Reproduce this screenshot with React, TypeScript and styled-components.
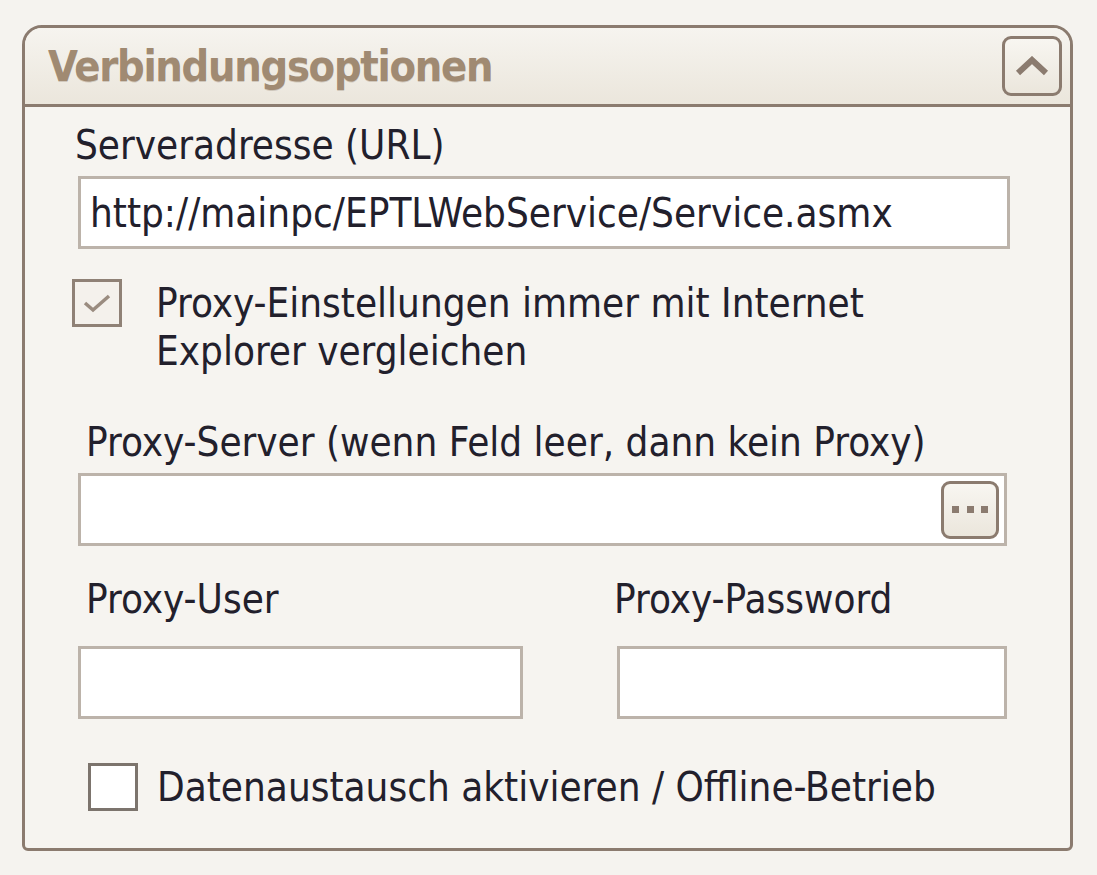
import React from "react";
import styled, { createGlobalStyle } from "styled-components";

const GlobalStyle = createGlobalStyle`
  html, body {
    margin: 0;
    padding: 0;
    background: #f5f3ef;
  }
  body {
    font-family: "DejaVu Sans Condensed", "DejaVu Sans", "Liberation Sans", sans-serif;
    font-stretch: condensed;
    color: #22202c;
  }
`;

const Page = styled.div`
  padding: 25px 0 0 22px;
  height: 875px;
  box-sizing: border-box;
`;

const Panel = styled.section`
  width: 1051px;
  height: 826px;
  box-sizing: border-box;
  border: 3px solid #8b7b6f;
  border-radius: 20px 20px 6px 6px;
  background: #f6f4f0;
  display: flex;
  flex-direction: column;
  overflow: hidden;
`;

const Header = styled.header`
  height: 79px;
  flex: none;
  box-sizing: border-box;
  border-bottom: 3px solid #8b7b6f;
  background: linear-gradient(#f6f4ef, #ebe6dc);
  display: flex;
  align-items: center;
  justify-content: space-between;
  padding: 0 8px 0 23px;
`;

const Title = styled.h2`
  margin: 0;
  font-size: 43px;
  font-weight: bold;
  color: #a08a72;
  letter-spacing: -1.3px;
  text-shadow: 0 1px 0 rgba(120, 100, 80, 0.25);
`;

const SquareButton = styled.button<{ size: number }>`
  width: ${(p) => p.size}px;
  height: ${(p) => p.size}px;
  padding: 0;
  box-sizing: border-box;
  border: 3px solid #8b7b6f;
  border-radius: 9px;
  background: linear-gradient(#f8f6f1, #ebe6dc);
  display: flex;
  align-items: center;
  justify-content: center;
  flex: none;
`;

const Body = styled.div`
  display: flex;
  flex-direction: column;
  padding-top: 14px;
`;

const Label = styled.div<{ indent: number; top?: number }>`
  margin-left: ${(p) => p.indent}px;
  margin-top: ${(p) => p.top ?? 0}px;
  font-size: 40px;
  line-height: 48px;
  white-space: nowrap;
`;

const Field = styled.div<{ width: number }>`
  width: ${(p) => p.width}px;
  height: 73px;
  box-sizing: border-box;
  border: 3px solid #bcb3aa;
  background: #ffffff;
  display: flex;
  align-items: center;
  justify-content: space-between;
  padding: 0 5px 0 9px;
  font-size: 40px;
  white-space: nowrap;
`;

const Row = styled.div<{ indent: number; top: number }>`
  display: flex;
  margin-left: ${(p) => p.indent}px;
  margin-top: ${(p) => p.top}px;
`;

const Column = styled.div<{ gap: number; offset?: number }>`
  display: flex;
  flex-direction: column;
  gap: ${(p) => p.gap}px;
  margin-left: ${(p) => p.offset ?? 0}px;
`;

const CheckRow = styled.label<{ indent: number; top: number }>`
  display: flex;
  align-items: flex-start;
  margin-left: ${(p) => p.indent}px;
  margin-top: ${(p) => p.top}px;
  font-size: 40px;
  line-height: 48px;
`;

const Box = styled.span<{ checked?: boolean }>`
  width: 50px;
  height: 48px;
  flex: none;
  box-sizing: border-box;
  border: 3px solid ${(p) => (p.checked ? "#8f8176" : "#7c746d")};
  background: ${(p) => (p.checked ? "#f4f1ec" : "#ffffff")};
  display: flex;
  align-items: center;
  justify-content: center;
`;

const CheckText = styled.span<{ gap: number }>`
  margin-left: ${(p) => p.gap}px;
`;

const Chevron = () => (
  <svg width="34" height="20" viewBox="0 0 34 20">
    <path d="M3 17 L17 4 L31 17" fill="none" stroke="#8b7b6f" strokeWidth="6" />
  </svg>
);

const Dots = () => (
  <svg width="40" height="10" viewBox="0 0 40 10">
    <rect x="2" y="1" width="7" height="7" fill="#8b7b6f" />
    <rect x="17" y="1" width="7" height="7" fill="#8b7b6f" />
    <rect x="31" y="1" width="7" height="7" fill="#8b7b6f" />
  </svg>
);

const Tick = () => (
  <svg width="30" height="24" viewBox="0 0 30 24">
    <path d="M3 12 L11 19 L27 5" fill="none" stroke="#9a8c80" strokeWidth="3.5" />
  </svg>
);

export default function App() {
  return (
    <>
      <GlobalStyle />
      <Page>
        <Panel>
          <Header>
            <Title>Verbindungsoptionen</Title>
            <SquareButton size={60}>
              <Chevron />
            </SquareButton>
          </Header>
          <Body>
            <Label indent={50}>Serveradresse (URL)</Label>
            <Row indent={53} top={7}>
              <Field width={932}>http://mainpc/EPTLWebService/Service.asmx</Field>
            </Row>
            <CheckRow indent={47} top={30}>
              <Box checked>
                <Tick />
              </Box>
              <CheckText gap={34}>
                Proxy-Einstellungen immer mit Internet
                <br />
                Explorer vergleichen
              </CheckText>
            </CheckRow>
            <Label indent={61} top={43}>
              Proxy-Server (wenn Feld leer, dann kein Proxy)
            </Label>
            <Row indent={53} top={7}>
              <Field width={929}>
                <span />
                <SquareButton size={58}>
                  <Dots />
                </SquareButton>
              </Field>
            </Row>
            <Row indent={53} top={29}>
              <Column gap={23}>
                <Label indent={8}>Proxy-User</Label>
                <Field width={445} />
              </Column>
              <Column gap={23} offset={94}>
                <Label indent={-3}>Proxy-Password</Label>
                <Field width={390} />
              </Column>
            </Row>
            <CheckRow indent={63} top={44}>
              <Box />
              <CheckText gap={19}>Datenaustausch aktivieren / Offline-Betrieb</CheckText>
            </CheckRow>
          </Body>
        </Panel>
      </Page>
    </>
  );
}
